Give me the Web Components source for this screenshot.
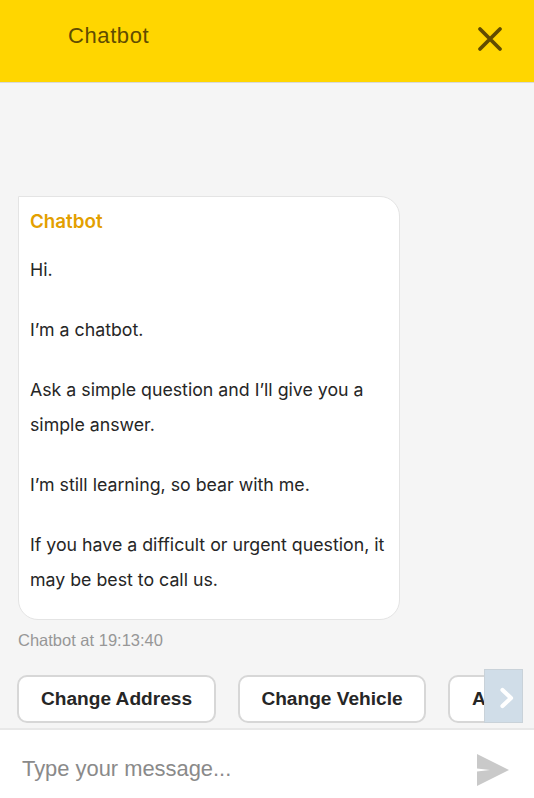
<!DOCTYPE html>
<html><head><meta charset="utf-8"><style>
html,body{margin:0;padding:0;height:100%;overflow:hidden;background:#f5f5f5}
</style></head><body>
<chat-app></chat-app>
<template id="t-app"><style>
:host{display:flex;flex-direction:column;width:534px;height:798px;background:#f5f5f5;overflow:hidden}
.log{flex:1 1 0;min-height:0;display:flex;flex-direction:column;padding:113px 0 0 18px}
</style>
<chat-header>Chatbot</chat-header>
<div class="log">
<chat-bubble name="Chatbot">
<p>Hi.</p><p>I’m a chatbot.</p><p>Ask a simple question and I’ll give you a simple answer.</p><p>I’m still learning, so bear with me.</p><p>If you have a difficult or urgent question, it may be best to call us.</p>
</chat-bubble>
<chat-time>Chatbot at 19:13:40</chat-time>
</div>
<quick-bar></quick-bar>
<chat-input></chat-input>
</template>
<script>
function def(name,html,init){customElements.define(name,class extends HTMLElement{connectedCallback(){if(this.shadowRoot)return;const r=this.attachShadow({mode:'open'});r.innerHTML=html;if(init)init(this,r);}});}
const SANS='"Liberation Sans",Arial,sans-serif';
def('chat-header',`<style>
:host{display:flex;flex:none;height:83px;box-sizing:border-box;background:#ffd600;border-bottom:1px solid #d9d9d9;justify-content:space-between;align-items:flex-start;font:22px ${SANS};color:#614c00}
.t{margin:23px 0 0 68px;line-height:26px;letter-spacing:.6px}
svg{margin:26px 31px 0 0;display:block}
</style><div class="t"><slot></slot></div><svg width="26" height="26" viewBox="0 0 26 26"><path d="M3 3 23 23M23 3 3 23" stroke="#614c00" stroke-width="3.800" stroke-linecap="round" fill="none"/></svg>`);
def('chat-bubble',`<style>
:host{display:block;box-sizing:border-box;width:382px;height:424px;background:#fff;border:1.5px solid #e4e4e4;border-radius:0 20px 20px 20px;padding:0 11px;font:17.75px Inter,sans-serif;color:#262626;flex:none}
.n{color:#e39f00;font-weight:600;font-size:18.800px;line-height:24px;margin-top:13px;margin-bottom:18px}
::slotted(p){margin:0 0 25px;line-height:35px}
</style><div class="n"></div><slot></slot>`,(h,r)=>{r.querySelector('.n').textContent=h.getAttribute('name')});
def('chat-time',`<style>:host{display:block;font:16.500px ${SANS};color:#979797;line-height:20px;margin-top:10px;flex:none}</style><slot></slot>`);
def('quick-btn',`<style>:host{flex:none;box-sizing:border-box;height:48px;display:flex;align-items:center;justify-content:center;background:#fff;border:2px solid #d7d7d7;border-radius:10px;font:bold 19.100px ${SANS};color:#262626}</style><slot></slot>`);
def('quick-bar',`<style>
:host{display:block;position:relative;flex:none;height:62px;border-bottom:2px solid #e8e8e8;box-sizing:border-box}
.row{display:flex;gap:22px;margin:7px 11px 0 17px;overflow:hidden}
.next{position:absolute;left:484px;top:1px;width:39px;height:54px;background:#d0dde8;border:1px solid #c9d2d9;box-sizing:border-box;display:flex;align-items:center;justify-content:center;padding:4px 0 0 7px}
</style><div class="row"><quick-btn style="width:199px">Change Address</quick-btn><quick-btn style="width:188px">Change Vehicle</quick-btn><quick-btn style="width:120px;justify-content:flex-start;padding-left:22px">Add</quick-btn></div>
<div class="next"><svg width="16" height="22" viewBox="0 0 16 22"><path d="M3.500 3 12 11 3.500 19" stroke="#fff" stroke-width="4.200" stroke-linecap="round" stroke-linejoin="round" fill="none"/></svg></div>`);
def('chat-input',`<style>
:host{display:flex;flex:none;height:68px;box-sizing:border-box;background:#fff;align-items:center;justify-content:space-between;padding:9px 24px 0 22px;font:21.900px ${SANS};color:#8a8a8a}
svg{display:block;margin-top:3px}
</style><span>Type your message...</span><svg width="34" height="33" viewBox="0 0 34 33"><path d="M1 0 33 16 1 32V17.500L14 16 1 14.500Z" fill="#c9c9c9"/></svg>`);
def('chat-app',document.getElementById('t-app').innerHTML);
</script>
</body></html>
